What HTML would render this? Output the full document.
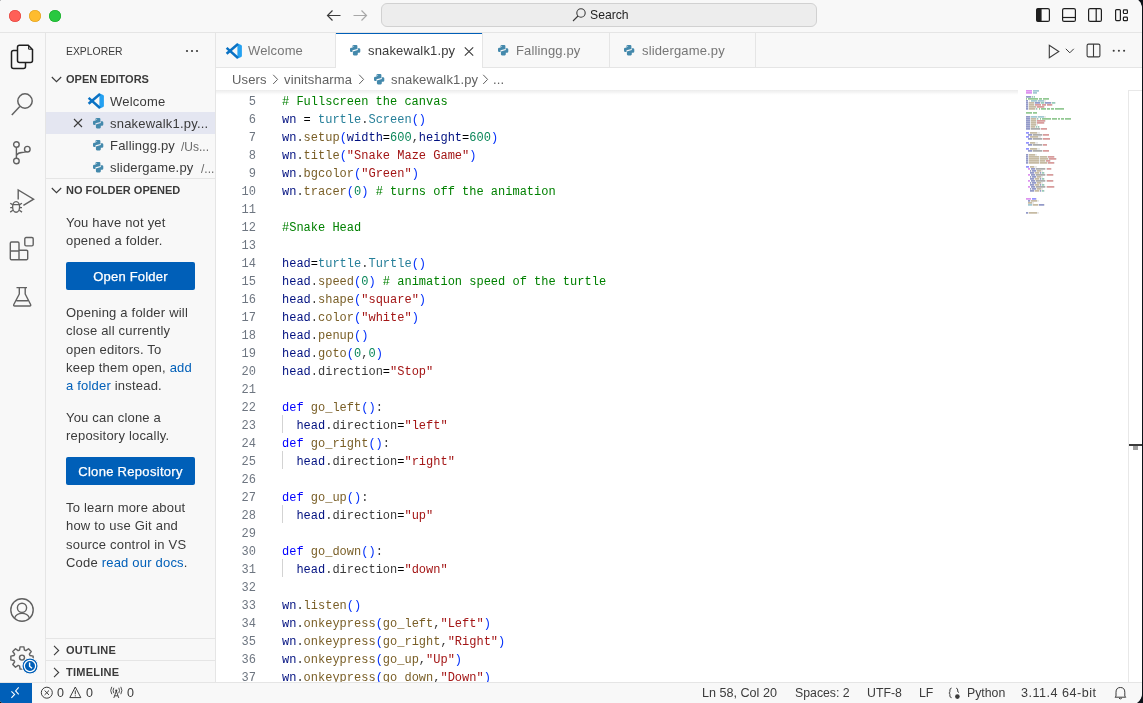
<!DOCTYPE html>
<html><head><meta charset="utf-8">
<style>
*{margin:0;padding:0;box-sizing:border-box}
html,body{width:1143px;height:703px;overflow:hidden;background:#0d1118}
body{position:relative;font-family:"Liberation Sans",sans-serif;color:#3B3B3B}
#win{position:absolute;left:-3px;top:-3px;width:1145px;height:708px;border-radius:12px;overflow:hidden;background:#F8F8F8}
#c{position:absolute;left:3px;top:3px;width:1142px;height:703px;will-change:transform}
.a{position:absolute}
.t{position:absolute;white-space:nowrap}
svg{position:absolute;overflow:visible}
.ln{left:216px;width:40px;text-align:right;font-family:"Liberation Mono",monospace;font-size:12px;line-height:18px;color:#6E7681}
.code{left:282px;font-family:"Liberation Mono",monospace;font-size:12px;line-height:18px;white-space:pre}
</style></head><body>
<div id="win"><div id="c">
<!-- title bar -->
<div class="a" style="left:0;top:0;width:1142px;height:32px;background:#F8F8F8"></div>
<div class="a" style="left:0;top:32px;width:1142px;height:1px;background:#E5E5E5"></div>
<div class="a" style="left:9px;top:10px;width:12px;height:12px;border-radius:50%;background:#FF5F57;box-shadow:inset 0 0 0 0.6px #E0443E"></div>
<div class="a" style="left:29px;top:10px;width:12px;height:12px;border-radius:50%;background:#FEBC2E;box-shadow:inset 0 0 0 0.6px #DEA123"></div>
<div class="a" style="left:49px;top:10px;width:12px;height:12px;border-radius:50%;background:#28C840;box-shadow:inset 0 0 0 0.6px #1AAB29"></div>
<svg style="left:326px;top:9px" width="16" height="13" viewBox="0 0 16 13"><path d="M1.5 6.5H14.5M6.5 1.5L1.5 6.5L6.5 11.5" fill="none" stroke="#3B3B3B" stroke-width="1.2"/></svg>
<svg style="left:352px;top:9px" width="16" height="13" viewBox="0 0 16 13"><path d="M1.5 6.5H14.5M9.5 1.5L14.5 6.5L9.5 11.5" fill="none" stroke="#A8A8A8" stroke-width="1.2"/></svg>
<div class="a" style="left:381px;top:3px;width:436px;height:24px;border-radius:6px;background:#EDEDED;border:1px solid #D1D1D1"></div>
<svg style="left:572px;top:8px" width="14" height="14" viewBox="0 0 14 14"><circle cx="9" cy="5" r="4.2" fill="none" stroke="#3B3B3B" stroke-width="1.1"/><path d="M6 8L1 13" stroke="#3B3B3B" stroke-width="1.1"/></svg>
<div class="t" style="left:590px;top:7px;font-size:12.2px;line-height:16px;color:#1F1F1F">Search</div>
<!-- layout icons -->
<svg style="left:1036px;top:8px" width="14" height="14" viewBox="0 0 14 14"><rect x="0.6" y="0.6" width="12.8" height="12.8" rx="1.5" fill="none" stroke="#1F1F1F" stroke-width="1.2"/><rect x="0.6" y="0.6" width="5" height="12.8" rx="1" fill="#1F1F1F"/></svg>
<svg style="left:1062px;top:8px" width="14" height="14" viewBox="0 0 14 14"><rect x="0.6" y="0.6" width="12.8" height="12.8" rx="1.5" fill="none" stroke="#1F1F1F" stroke-width="1.2"/><path d="M0.6 9.5H13.4" stroke="#1F1F1F" stroke-width="1.2"/></svg>
<svg style="left:1088px;top:8px" width="14" height="14" viewBox="0 0 14 14"><rect x="0.6" y="0.6" width="12.8" height="12.8" rx="1.5" fill="none" stroke="#1F1F1F" stroke-width="1.2"/><path d="M8.2 0.6V13.4" stroke="#1F1F1F" stroke-width="1.2"/></svg>
<svg style="left:1115px;top:9px" width="14" height="13" viewBox="0 0 14 13"><rect x="0.6" y="0.6" width="4.8" height="11" rx="1" fill="none" stroke="#1F1F1F" stroke-width="1.2"/><rect x="8.4" y="0.9" width="4" height="3.6" rx="0.8" fill="none" stroke="#1F1F1F" stroke-width="1.2"/><rect x="8.4" y="8.1" width="4" height="3.6" rx="0.8" fill="none" stroke="#1F1F1F" stroke-width="1.2"/></svg>

<!-- activity bar -->
<div class="a" style="left:45px;top:33px;width:1px;height:649px;background:#E5E5E5"></div>
<!-- files -->
<svg style="left:10px;top:44px" width="24" height="26" viewBox="0 0 24 26"><path d="M7.5 6.5H3.5a2 2 0 0 0-2 2V22.5a2 2 0 0 0 2 2H13.5a2 2 0 0 0 2-2V19" fill="none" stroke="#1F1F1F" stroke-width="1.5"/><path d="M9.5 1.2H18.2L22.5 5.5V16.5a2 2 0 0 1-2 2H9.5a2 2 0 0 1-2-2V3.2a2 2 0 0 1 2-2z" fill="none" stroke="#1F1F1F" stroke-width="1.5"/><path d="M18.6 1.8V5.2H22" fill="none" stroke="#1F1F1F" stroke-width="1"/></svg>
<!-- search -->
<svg style="left:10px;top:91px" width="24" height="26" viewBox="0 0 24 26"><circle cx="15" cy="10" r="7.2" fill="none" stroke="#616161" stroke-width="1.5"/><path d="M9.8 15.5L1.8 24" stroke="#616161" stroke-width="1.5"/></svg>
<!-- scm -->
<svg style="left:10px;top:138px" width="24" height="26" viewBox="0 0 24 26"><circle cx="6.4" cy="6.5" r="2.8" fill="none" stroke="#616161" stroke-width="1.4"/><circle cx="17.3" cy="11.2" r="2.8" fill="none" stroke="#616161" stroke-width="1.4"/><circle cx="6.4" cy="23" r="2.8" fill="none" stroke="#616161" stroke-width="1.4"/><path d="M6.4 9.3V20.2M6.4 17.5C7.5 15.5 9 14.5 12 14.5C14.5 14.5 16 13.8 16.5 13.5" fill="none" stroke="#616161" stroke-width="1.4"/></svg>
<!-- run debug -->
<svg style="left:9px;top:187px" width="26" height="28" viewBox="0 0 26 28"><path d="M9.2 12.4V2.9L24.6 12.2L14.4 18.4" fill="none" stroke="#616161" stroke-width="1.4" stroke-linejoin="miter"/><ellipse cx="7.1" cy="19.9" rx="3.5" ry="5.3" fill="none" stroke="#616161" stroke-width="1.4"/><path d="M3.8 17.6H10.4M3.6 17.6L1.2 16.2M10.6 17.6L13 16.2M3.5 20.6H1.2M10.7 20.6H13M3.9 23.2L1.2 25.1M10.3 23.2L13 25.1" fill="none" stroke="#616161" stroke-width="1.3"/></svg>
<!-- extensions -->
<svg style="left:9px;top:236px" width="26" height="26" viewBox="0 0 26 26"><path d="M2.5 6H8.8a1.2 1.2 0 0 1 1.2 1.2V14.2H17.5a1.2 1.2 0 0 1 1.2 1.2V22.5a1.2 1.2 0 0 1-1.2 1.2H2.5a1.2 1.2 0 0 1-1.2-1.2V7.2A1.2 1.2 0 0 1 2.5 6zM1.3 15H10V23.7" fill="none" stroke="#616161" stroke-width="1.4"/><rect x="15.8" y="1.5" width="8.4" height="8.4" rx="1.3" fill="none" stroke="#616161" stroke-width="1.4"/></svg>
<!-- testing flask -->
<svg style="left:12px;top:285px" width="22" height="24" viewBox="0 0 22 24"><path d="M4.5 2.6H15M7.3 2.6V9L1.8 19.5C1.4 20.4 1.8 21 2.7 21H17.7C18.6 21 19 20.4 18.6 19.5L13.2 9V2.6M4.5 15.7H15.9" fill="none" stroke="#616161" stroke-width="1.4" stroke-linejoin="round"/></svg>
<!-- account -->
<svg style="left:10px;top:598px" width="24" height="24" viewBox="0 0 24 24"><circle cx="12" cy="12" r="11.2" fill="none" stroke="#616161" stroke-width="1.4"/><circle cx="12" cy="9.8" r="4.6" fill="none" stroke="#616161" stroke-width="1.4"/><path d="M4.6 20C5.8 17 8.6 15.4 12 15.4S18.2 17 19.4 20" fill="none" stroke="#616161" stroke-width="1.4"/></svg>
<!-- gear -->
<svg style="left:9px;top:645px" width="26" height="26" viewBox="0 0 26 26"><path d="M9.82 5.33L10.55 5.07L11.09 1.86L14.91 1.86L15.45 5.07L16.18 5.33L16.87 5.66L19.52 3.77L22.23 6.48L20.34 9.13L20.67 9.82L20.93 10.55L24.14 11.09L24.14 14.91L20.93 15.45L20.67 16.18L20.34 16.87L22.23 19.52L19.52 22.23L16.87 20.34L16.18 20.67L15.45 20.93L14.91 24.14L11.09 24.14L10.55 20.93L9.82 20.67L9.13 20.34L6.48 22.23L3.77 19.52L5.66 16.87L5.33 16.18L5.07 15.45L1.86 14.91L1.86 11.09L5.07 10.55L5.33 9.82L5.66 9.13L3.77 6.48L6.48 3.77L9.13 5.66Z" fill="none" stroke="#616161" stroke-width="1.4" stroke-linejoin="round"/><circle cx="13" cy="12.6" r="2.5" fill="none" stroke="#616161" stroke-width="1.4"/></svg>
<svg style="left:21px;top:657px" width="18" height="18" viewBox="0 0 18 18"><circle cx="9" cy="9" r="8" fill="#005FB8" stroke="#F8F8F8" stroke-width="1"/><circle cx="9" cy="9" r="5.6" fill="none" stroke="#fff" stroke-width="1.2"/><path d="M8.6 5.6V9.2L11 11.2" fill="none" stroke="#fff" stroke-width="1.4"/></svg>

<!-- sidebar -->
<div class="a" style="left:215px;top:33px;width:1px;height:649px;background:#E5E5E5"></div>
<div class="t" style="left:66px;top:45px;font-size:10.4px;line-height:14px;letter-spacing:0px;color:#3B3B3B">EXPLORER</div>
<svg style="left:185px;top:49px" width="14" height="4" viewBox="0 0 14 4"><circle cx="2" cy="2" r="1.1" fill="#3B3B3B"/><circle cx="7" cy="2" r="1.1" fill="#3B3B3B"/><circle cx="12" cy="2" r="1.1" fill="#3B3B3B"/></svg>
<svg style="left:51px;top:76px" width="11" height="7" viewBox="0 0 11 7"><path d="M0.8 1L5.5 5.7L10.2 1" fill="none" stroke="#3B3B3B" stroke-width="1.1"/></svg>
<div class="t" style="left:66px;top:72px;font-size:11px;line-height:14px;font-weight:bold;color:#3B3B3B">OPEN EDITORS</div>
<!-- rows -->
<div class="a" style="left:46px;top:112px;width:169px;height:22px;background:#E4E6F1"></div>
<svg style="left:88px;top:93px" width="16" height="16" viewBox="0 0 16 16"><path d="M11.4 0.2L15.2 2Q15.9 2.4 15.9 3.2V12.8Q15.9 13.6 15.2 14L11.4 15.8Z" fill="#24A1F1"/><path d="M12 1L0.6 10.8M0.6 4.9L12 15" stroke="#0A72C4" stroke-width="2.5"/></svg>
<div class="t" style="left:110px;top:91px;font-size:13px;line-height:22px;letter-spacing:0.2px;color:#3B3B3B">Welcome</div>
<svg style="left:73px;top:118px" width="10" height="10" viewBox="0 0 10 10"><path d="M1 1L9 9M9 1L1 9" stroke="#3B3B3B" stroke-width="1.1"/></svg>
<div class="t" style="left:110px;top:113px;font-size:13px;line-height:22px;letter-spacing:0.2px;color:#3B3B3B">snakewalk1.py...</div>
<div class="t" style="left:110px;top:135px;font-size:13px;line-height:22px;letter-spacing:0.2px;color:#3B3B3B">Fallingg.py</div>
<div class="t" style="left:181px;top:136px;font-size:12px;line-height:22px;color:#6A6A6A">/Us...</div>
<div class="t" style="left:110px;top:157px;font-size:13px;line-height:22px;letter-spacing:0.2px;color:#3B3B3B">slidergame.py</div>
<div class="t" style="left:201px;top:158px;font-size:12px;line-height:22px;color:#6A6A6A">/...</div>
<svg style="left:93px;top:118px" width="11" height="11" viewBox="0 0 11 11"><path d="M3.6 0H6.3Q7.4 0 7.4 1.1V3.9L2.5 5.3V7.1H1.3Q0 7.1 0 5.8V4Q0 2.7 1.3 2.7H2.5V1.1Q2.5 0 3.6 0Z" fill="#4489AC"/><path d="M3.6 0H6.3Q7.4 0 7.4 1.1V3.9L2.5 5.3V7.1H1.3Q0 7.1 0 5.8V4Q0 2.7 1.3 2.7H2.5V1.1Q2.5 0 3.6 0Z" transform="rotate(180 5.15 5.2)" fill="#4489AC"/><circle cx="3.6" cy="1.2" r="0.5" fill="#fff" opacity="0.7"/></svg>
<svg style="left:93px;top:140px" width="11" height="11" viewBox="0 0 11 11"><path d="M3.6 0H6.3Q7.4 0 7.4 1.1V3.9L2.5 5.3V7.1H1.3Q0 7.1 0 5.8V4Q0 2.7 1.3 2.7H2.5V1.1Q2.5 0 3.6 0Z" fill="#4489AC"/><path d="M3.6 0H6.3Q7.4 0 7.4 1.1V3.9L2.5 5.3V7.1H1.3Q0 7.1 0 5.8V4Q0 2.7 1.3 2.7H2.5V1.1Q2.5 0 3.6 0Z" transform="rotate(180 5.15 5.2)" fill="#4489AC"/><circle cx="3.6" cy="1.2" r="0.5" fill="#fff" opacity="0.7"/></svg>
<svg style="left:93px;top:162px" width="11" height="11" viewBox="0 0 11 11"><path d="M3.6 0H6.3Q7.4 0 7.4 1.1V3.9L2.5 5.3V7.1H1.3Q0 7.1 0 5.8V4Q0 2.7 1.3 2.7H2.5V1.1Q2.5 0 3.6 0Z" fill="#4489AC"/><path d="M3.6 0H6.3Q7.4 0 7.4 1.1V3.9L2.5 5.3V7.1H1.3Q0 7.1 0 5.8V4Q0 2.7 1.3 2.7H2.5V1.1Q2.5 0 3.6 0Z" transform="rotate(180 5.15 5.2)" fill="#4489AC"/><circle cx="3.6" cy="1.2" r="0.5" fill="#fff" opacity="0.7"/></svg>
<!-- no folder -->
<div class="a" style="left:46px;top:178px;width:169px;height:1px;background:#E5E5E5"></div>
<svg style="left:51px;top:187px" width="11" height="7" viewBox="0 0 11 7"><path d="M0.8 1L5.5 5.7L10.2 1" fill="none" stroke="#3B3B3B" stroke-width="1.1"/></svg>
<div class="t" style="left:66px;top:183px;font-size:11px;line-height:14px;font-weight:bold;color:#3B3B3B">NO FOLDER OPENED</div>
<div class="a" style="left:66px;top:214px;width:150px;font-size:13px;line-height:18.2px;letter-spacing:0.2px;color:#3B3B3B">
<div class="t" style="left:0;top:0">You have not yet</div>
<div class="t" style="left:0;top:18.3px">opened a folder.</div>
</div>
<div class="a" style="left:66px;top:262px;width:129px;height:28px;background:#005FB8;border-radius:2px"></div>
<div class="t" style="left:66px;top:263px;width:129px;text-align:center;font-size:13px;line-height:28px;letter-spacing:0.2px;color:#fff;-webkit-text-stroke:0.25px #fff">Open Folder</div>
<div class="a" style="left:66px;top:304px;width:150px;font-size:13px;line-height:18.2px;letter-spacing:0.2px;color:#3B3B3B">
<div class="t" style="left:0;top:0">Opening a folder will</div>
<div class="t" style="left:0;top:18.3px">close all currently</div>
<div class="t" style="left:0;top:36.6px">open editors. To</div>
<div class="t" style="left:0;top:54.9px">keep them open, <span style="color:#005FB8">add</span></div>
<div class="t" style="left:0;top:73.2px"><span style="color:#005FB8">a folder</span> instead.</div>
</div>
<div class="a" style="left:66px;top:409px;width:150px;font-size:13px;line-height:18.2px;letter-spacing:0.2px;color:#3B3B3B">
<div class="t" style="left:0;top:0">You can clone a</div>
<div class="t" style="left:0;top:18.3px">repository locally.</div>
</div>
<div class="a" style="left:66px;top:457px;width:129px;height:28px;background:#005FB8;border-radius:2px"></div>
<div class="t" style="left:66px;top:458px;width:129px;text-align:center;font-size:13px;line-height:28px;letter-spacing:0.3px;color:#fff;-webkit-text-stroke:0.25px #fff">Clone Repository</div>
<div class="a" style="left:66px;top:499px;width:150px;font-size:13px;line-height:18.2px;letter-spacing:0.2px;color:#3B3B3B">
<div class="t" style="left:0;top:0">To learn more about</div>
<div class="t" style="left:0;top:18.3px">how to use Git and</div>
<div class="t" style="left:0;top:36.6px">source control in VS</div>
<div class="t" style="left:0;top:54.9px">Code <span style="color:#005FB8">read our docs</span>.</div>
</div>
<!-- outline / timeline -->
<div class="a" style="left:46px;top:638px;width:169px;height:1px;background:#E5E5E5"></div>
<svg style="left:53px;top:645px" width="7" height="11" viewBox="0 0 7 11"><path d="M1 0.8L5.7 5.5L1 10.2" fill="none" stroke="#3B3B3B" stroke-width="1.1"/></svg>
<div class="t" style="left:66px;top:643px;font-size:11px;line-height:14px;font-weight:bold;letter-spacing:0.25px;color:#3B3B3B">OUTLINE</div>
<div class="a" style="left:46px;top:660px;width:169px;height:1px;background:#E5E5E5"></div>
<svg style="left:53px;top:667px" width="7" height="11" viewBox="0 0 7 11"><path d="M1 0.8L5.7 5.5L1 10.2" fill="none" stroke="#3B3B3B" stroke-width="1.1"/></svg>
<div class="t" style="left:66px;top:665px;font-size:11px;line-height:14px;font-weight:bold;letter-spacing:0.25px;color:#3B3B3B">TIMELINE</div>

<!-- tabs -->
<div class="a" style="left:216px;top:33px;width:926px;height:35px;background:#F8F8F8"></div>
<div class="a" style="left:216px;top:67px;width:926px;height:1px;background:#E5E5E5"></div>
<div class="a" style="left:335px;top:33px;width:1px;height:34px;background:#E5E5E5"></div>
<div class="a" style="left:336px;top:33px;width:146px;height:35px;background:#FFFFFF"></div>
<div class="a" style="left:336px;top:33px;width:146px;height:1px;background:#005FB8"></div>
<div class="a" style="left:482px;top:33px;width:1px;height:34px;background:#E5E5E5"></div>
<div class="a" style="left:609px;top:33px;width:1px;height:34px;background:#E5E5E5"></div>
<div class="a" style="left:755px;top:33px;width:1px;height:34px;background:#E5E5E5"></div>
<svg style="left:226px;top:43px" width="16" height="16" viewBox="0 0 16 16"><path d="M11.4 0.2L15.2 2Q15.9 2.4 15.9 3.2V12.8Q15.9 13.6 15.2 14L11.4 15.8Z" fill="#24A1F1"/><path d="M12 1L0.6 10.8M0.6 4.9L12 15" stroke="#0A72C4" stroke-width="2.5"/></svg>
<div class="t" style="left:248px;top:40px;font-size:13px;line-height:22px;letter-spacing:0.15px;color:#767676">Welcome</div>
<div class="t" style="left:368px;top:40px;font-size:13px;line-height:22px;letter-spacing:0.15px;color:#3B3B3B">snakewalk1.py</div>
<svg style="left:464px;top:47px" width="10" height="9" viewBox="0 0 10 9"><path d="M0.8 0.4L9.2 8.6M9.2 0.4L0.8 8.6" stroke="#3B3B3B" stroke-width="1.1"/></svg>
<div class="t" style="left:516px;top:40px;font-size:13px;line-height:22px;letter-spacing:0.15px;color:#767676">Fallingg.py</div>
<div class="t" style="left:642px;top:40px;font-size:13px;line-height:22px;letter-spacing:0.15px;color:#767676">slidergame.py</div>
<!-- editor actions -->
<svg style="left:1048px;top:44px" width="12" height="15" viewBox="0 0 12 15"><path d="M1.3 1.2V13.8L10.8 7.5Z" fill="none" stroke="#3B3B3B" stroke-width="1.1" stroke-linejoin="miter"/></svg>
<svg style="left:1065px;top:48px" width="10" height="6" viewBox="0 0 10 6"><path d="M0.8 0.8L4.8 4.8L8.8 0.8" fill="none" stroke="#3B3B3B" stroke-width="1"/></svg>
<svg style="left:1086px;top:43px" width="15" height="15" viewBox="0 0 15 15"><rect x="1.1" y="1.1" width="12.8" height="12.8" rx="1.4" fill="none" stroke="#3B3B3B" stroke-width="1.1"/><path d="M7.5 1.1V13.9" stroke="#3B3B3B" stroke-width="1.1"/></svg>
<svg style="left:1112px;top:49px" width="14" height="4" viewBox="0 0 14 4"><circle cx="1.7" cy="1.8" r="1.05" fill="#3B3B3B"/><circle cx="6.9" cy="1.8" r="1.05" fill="#3B3B3B"/><circle cx="12.1" cy="1.8" r="1.05" fill="#3B3B3B"/></svg>
<!-- breadcrumbs -->
<div class="a" style="left:216px;top:68px;width:926px;height:23px;background:#FFFFFF"></div>
<div class="t" style="left:232px;top:69px;font-size:13px;line-height:22px;letter-spacing:0.15px;color:#616161">Users</div>
<svg style="left:272px;top:74px" width="7" height="11" viewBox="0 0 7 11"><path d="M1.2 0.8L5.6 5.4L1.2 10" fill="none" stroke="#616161" stroke-width="1"/></svg>
<div class="t" style="left:284px;top:69px;font-size:13px;line-height:22px;letter-spacing:0.15px;color:#616161">vinitsharma</div>
<svg style="left:358px;top:74px" width="7" height="11" viewBox="0 0 7 11"><path d="M1.2 0.8L5.6 5.4L1.2 10" fill="none" stroke="#616161" stroke-width="1"/></svg>
<div class="t" style="left:391px;top:69px;font-size:13px;line-height:22px;letter-spacing:0.15px;color:#616161">snakewalk1.py</div>
<svg style="left:482px;top:74px" width="7" height="11" viewBox="0 0 7 11"><path d="M1.2 0.8L5.6 5.4L1.2 10" fill="none" stroke="#616161" stroke-width="1"/></svg>
<div class="t" style="left:493px;top:69px;font-size:13px;line-height:22px;letter-spacing:0.15px;color:#616161">...</div>

<svg style="left:350px;top:45px" width="11" height="11" viewBox="0 0 11 11"><path d="M3.6 0H6.3Q7.4 0 7.4 1.1V3.9L2.5 5.3V7.1H1.3Q0 7.1 0 5.8V4Q0 2.7 1.3 2.7H2.5V1.1Q2.5 0 3.6 0Z" fill="#4489AC"/><path d="M3.6 0H6.3Q7.4 0 7.4 1.1V3.9L2.5 5.3V7.1H1.3Q0 7.1 0 5.8V4Q0 2.7 1.3 2.7H2.5V1.1Q2.5 0 3.6 0Z" transform="rotate(180 5.15 5.2)" fill="#4489AC"/><circle cx="3.6" cy="1.2" r="0.5" fill="#fff" opacity="0.7"/></svg>
<svg style="left:498px;top:45px" width="11" height="11" viewBox="0 0 11 11"><path d="M3.6 0H6.3Q7.4 0 7.4 1.1V3.9L2.5 5.3V7.1H1.3Q0 7.1 0 5.8V4Q0 2.7 1.3 2.7H2.5V1.1Q2.5 0 3.6 0Z" fill="#4489AC"/><path d="M3.6 0H6.3Q7.4 0 7.4 1.1V3.9L2.5 5.3V7.1H1.3Q0 7.1 0 5.8V4Q0 2.7 1.3 2.7H2.5V1.1Q2.5 0 3.6 0Z" transform="rotate(180 5.15 5.2)" fill="#4489AC"/><circle cx="3.6" cy="1.2" r="0.5" fill="#fff" opacity="0.7"/></svg>
<svg style="left:624px;top:45px" width="11" height="11" viewBox="0 0 11 11"><path d="M3.6 0H6.3Q7.4 0 7.4 1.1V3.9L2.5 5.3V7.1H1.3Q0 7.1 0 5.8V4Q0 2.7 1.3 2.7H2.5V1.1Q2.5 0 3.6 0Z" fill="#4489AC"/><path d="M3.6 0H6.3Q7.4 0 7.4 1.1V3.9L2.5 5.3V7.1H1.3Q0 7.1 0 5.8V4Q0 2.7 1.3 2.7H2.5V1.1Q2.5 0 3.6 0Z" transform="rotate(180 5.15 5.2)" fill="#4489AC"/><circle cx="3.6" cy="1.2" r="0.5" fill="#fff" opacity="0.7"/></svg>
<svg style="left:374px;top:74px" width="11" height="11" viewBox="0 0 11 11"><path d="M3.6 0H6.3Q7.4 0 7.4 1.1V3.9L2.5 5.3V7.1H1.3Q0 7.1 0 5.8V4Q0 2.7 1.3 2.7H2.5V1.1Q2.5 0 3.6 0Z" fill="#4489AC"/><path d="M3.6 0H6.3Q7.4 0 7.4 1.1V3.9L2.5 5.3V7.1H1.3Q0 7.1 0 5.8V4Q0 2.7 1.3 2.7H2.5V1.1Q2.5 0 3.6 0Z" transform="rotate(180 5.15 5.2)" fill="#4489AC"/><circle cx="3.6" cy="1.2" r="0.5" fill="#fff" opacity="0.7"/></svg>
<!-- editor -->
<div class="a" style="left:216px;top:91px;width:926px;height:591px;background:#FFFFFF"></div>
<div class="t ln" style="top:93px">5</div>
<div class="t code" style="top:93px"><span style="color:#008000"># Fullscreen the canvas</span></div>
<div class="t ln" style="top:111px">6</div>
<div class="t code" style="top:111px"><span style="color:#001080">wn</span><span style="color:#3B3B3B"> </span><span style="color:#000000">=</span><span style="color:#3B3B3B"> </span><span style="color:#267F99">turtle</span><span style="color:#3B3B3B">.</span><span style="color:#267F99">Screen</span><span style="color:#0431FA">()</span></div>
<div class="t ln" style="top:129px">7</div>
<div class="t code" style="top:129px"><span style="color:#001080">wn</span><span style="color:#3B3B3B">.</span><span style="color:#795E26">setup</span><span style="color:#0431FA">(</span><span style="color:#001080">width</span><span style="color:#000000">=</span><span style="color:#098658">600</span><span style="color:#3B3B3B">,</span><span style="color:#001080">height</span><span style="color:#000000">=</span><span style="color:#098658">600</span><span style="color:#0431FA">)</span></div>
<div class="t ln" style="top:147px">8</div>
<div class="t code" style="top:147px"><span style="color:#001080">wn</span><span style="color:#3B3B3B">.</span><span style="color:#795E26">title</span><span style="color:#0431FA">(</span><span style="color:#A31515">&quot;Snake Maze Game&quot;</span><span style="color:#0431FA">)</span></div>
<div class="t ln" style="top:165px">9</div>
<div class="t code" style="top:165px"><span style="color:#001080">wn</span><span style="color:#3B3B3B">.</span><span style="color:#795E26">bgcolor</span><span style="color:#0431FA">(</span><span style="color:#A31515">&quot;Green&quot;</span><span style="color:#0431FA">)</span></div>
<div class="t ln" style="top:183px">10</div>
<div class="t code" style="top:183px"><span style="color:#001080">wn</span><span style="color:#3B3B3B">.</span><span style="color:#795E26">tracer</span><span style="color:#0431FA">(</span><span style="color:#098658">0</span><span style="color:#0431FA">)</span><span style="color:#3B3B3B"> </span><span style="color:#008000"># turns off the animation</span></div>
<div class="t ln" style="top:201px">11</div>
<div class="t ln" style="top:219px">12</div>
<div class="t code" style="top:219px"><span style="color:#008000">#Snake Head</span></div>
<div class="t ln" style="top:237px">13</div>
<div class="t ln" style="top:255px">14</div>
<div class="t code" style="top:255px"><span style="color:#001080">head</span><span style="color:#000000">=</span><span style="color:#267F99">turtle</span><span style="color:#3B3B3B">.</span><span style="color:#267F99">Turtle</span><span style="color:#0431FA">()</span></div>
<div class="t ln" style="top:273px">15</div>
<div class="t code" style="top:273px"><span style="color:#001080">head</span><span style="color:#3B3B3B">.</span><span style="color:#795E26">speed</span><span style="color:#0431FA">(</span><span style="color:#098658">0</span><span style="color:#0431FA">)</span><span style="color:#3B3B3B"> </span><span style="color:#008000"># animation speed of the turtle</span></div>
<div class="t ln" style="top:291px">16</div>
<div class="t code" style="top:291px"><span style="color:#001080">head</span><span style="color:#3B3B3B">.</span><span style="color:#795E26">shape</span><span style="color:#0431FA">(</span><span style="color:#A31515">&quot;square&quot;</span><span style="color:#0431FA">)</span></div>
<div class="t ln" style="top:309px">17</div>
<div class="t code" style="top:309px"><span style="color:#001080">head</span><span style="color:#3B3B3B">.</span><span style="color:#795E26">color</span><span style="color:#0431FA">(</span><span style="color:#A31515">&quot;white&quot;</span><span style="color:#0431FA">)</span></div>
<div class="t ln" style="top:327px">18</div>
<div class="t code" style="top:327px"><span style="color:#001080">head</span><span style="color:#3B3B3B">.</span><span style="color:#795E26">penup</span><span style="color:#0431FA">()</span></div>
<div class="t ln" style="top:345px">19</div>
<div class="t code" style="top:345px"><span style="color:#001080">head</span><span style="color:#3B3B3B">.</span><span style="color:#795E26">goto</span><span style="color:#0431FA">(</span><span style="color:#098658">0</span><span style="color:#3B3B3B">,</span><span style="color:#098658">0</span><span style="color:#0431FA">)</span></div>
<div class="t ln" style="top:363px">20</div>
<div class="t code" style="top:363px"><span style="color:#001080">head</span><span style="color:#3B3B3B">.</span><span style="color:#3B3B3B">direction</span><span style="color:#000000">=</span><span style="color:#A31515">&quot;Stop&quot;</span></div>
<div class="t ln" style="top:381px">21</div>
<div class="t ln" style="top:399px">22</div>
<div class="t code" style="top:399px"><span style="color:#0000FF">def</span><span style="color:#3B3B3B"> </span><span style="color:#795E26">go_left</span><span style="color:#0431FA">()</span><span style="color:#3B3B3B">:</span></div>
<div class="t ln" style="top:417px">23</div>
<div class="t code" style="top:417px"><span style="color:#3B3B3B">  </span><span style="color:#001080">head</span><span style="color:#3B3B3B">.direction</span><span style="color:#000000">=</span><span style="color:#A31515">&quot;left&quot;</span></div>
<div class="t ln" style="top:435px">24</div>
<div class="t code" style="top:435px"><span style="color:#0000FF">def</span><span style="color:#3B3B3B"> </span><span style="color:#795E26">go_right</span><span style="color:#0431FA">()</span><span style="color:#3B3B3B">:</span></div>
<div class="t ln" style="top:453px">25</div>
<div class="t code" style="top:453px"><span style="color:#3B3B3B">  </span><span style="color:#001080">head</span><span style="color:#3B3B3B">.direction</span><span style="color:#000000">=</span><span style="color:#A31515">&quot;right&quot;</span></div>
<div class="t ln" style="top:471px">26</div>
<div class="t ln" style="top:489px">27</div>
<div class="t code" style="top:489px"><span style="color:#0000FF">def</span><span style="color:#3B3B3B"> </span><span style="color:#795E26">go_up</span><span style="color:#0431FA">()</span><span style="color:#3B3B3B">:</span></div>
<div class="t ln" style="top:507px">28</div>
<div class="t code" style="top:507px"><span style="color:#3B3B3B">  </span><span style="color:#001080">head</span><span style="color:#3B3B3B">.direction</span><span style="color:#000000">=</span><span style="color:#A31515">&quot;up&quot;</span></div>
<div class="t ln" style="top:525px">29</div>
<div class="t ln" style="top:543px">30</div>
<div class="t code" style="top:543px"><span style="color:#0000FF">def</span><span style="color:#3B3B3B"> </span><span style="color:#795E26">go_down</span><span style="color:#0431FA">()</span><span style="color:#3B3B3B">:</span></div>
<div class="t ln" style="top:561px">31</div>
<div class="t code" style="top:561px"><span style="color:#3B3B3B">  </span><span style="color:#001080">head</span><span style="color:#3B3B3B">.direction</span><span style="color:#000000">=</span><span style="color:#A31515">&quot;down&quot;</span></div>
<div class="t ln" style="top:579px">32</div>
<div class="t ln" style="top:597px">33</div>
<div class="t code" style="top:597px"><span style="color:#001080">wn</span><span style="color:#3B3B3B">.</span><span style="color:#795E26">listen</span><span style="color:#0431FA">()</span></div>
<div class="t ln" style="top:615px">34</div>
<div class="t code" style="top:615px"><span style="color:#001080">wn</span><span style="color:#3B3B3B">.</span><span style="color:#795E26">onkeypress</span><span style="color:#0431FA">(</span><span style="color:#795E26">go_left</span><span style="color:#3B3B3B">,</span><span style="color:#A31515">&quot;Left&quot;</span><span style="color:#0431FA">)</span></div>
<div class="t ln" style="top:633px">35</div>
<div class="t code" style="top:633px"><span style="color:#001080">wn</span><span style="color:#3B3B3B">.</span><span style="color:#795E26">onkeypress</span><span style="color:#0431FA">(</span><span style="color:#795E26">go_right</span><span style="color:#3B3B3B">,</span><span style="color:#A31515">&quot;Right&quot;</span><span style="color:#0431FA">)</span></div>
<div class="t ln" style="top:651px">36</div>
<div class="t code" style="top:651px"><span style="color:#001080">wn</span><span style="color:#3B3B3B">.</span><span style="color:#795E26">onkeypress</span><span style="color:#0431FA">(</span><span style="color:#795E26">go_up</span><span style="color:#3B3B3B">,</span><span style="color:#A31515">&quot;Up&quot;</span><span style="color:#0431FA">)</span></div>
<div class="t ln" style="top:669px">37</div>
<div class="t code" style="top:669px"><span style="color:#001080">wn</span><span style="color:#3B3B3B">.</span><span style="color:#795E26">onkeypress</span><span style="color:#0431FA">(</span><span style="color:#795E26">go_down</span><span style="color:#3B3B3B">,</span><span style="color:#A31515">&quot;Down&quot;</span><span style="color:#0431FA">)</span></div>
<div class="a" style="left:282px;top:415px;width:1px;height:18px;background:#D3D3D3"></div>
<div class="a" style="left:282px;top:451px;width:1px;height:18px;background:#D3D3D3"></div>
<div class="a" style="left:282px;top:505px;width:1px;height:18px;background:#D3D3D3"></div>
<div class="a" style="left:282px;top:559px;width:1px;height:18px;background:#D3D3D3"></div>
<div class="a" style="left:216px;top:90px;width:802px;height:5px;background:linear-gradient(#ECECEC,rgba(236,236,236,0))"></div>
<svg style="left:1026px;top:90px" width="100" height="130" viewBox="0 0 100 130"><g opacity="0.42"><rect x="0" y="0" width="6" height="1.75" fill="#AF00DB"/><rect x="7" y="0" width="6" height="1.75" fill="#267F99"/><rect x="0" y="2" width="6" height="1.75" fill="#AF00DB"/><rect x="7" y="2" width="4" height="1.75" fill="#267F99"/><rect x="0" y="6" width="5" height="1.75" fill="#001080"/><rect x="5" y="6" width="1" height="1.75" fill="#C8C8C8"/><rect x="6" y="6" width="1" height="1.75" fill="#098658"/><rect x="7" y="6" width="1" height="1.75" fill="#C8C8C8"/><rect x="8" y="6" width="1" height="1.75" fill="#098658"/><rect x="0" y="8" width="1" height="1.75" fill="#008000"/><rect x="2" y="8" width="10" height="1.75" fill="#008000"/><rect x="13" y="8" width="3" height="1.75" fill="#008000"/><rect x="17" y="8" width="6" height="1.75" fill="#008000"/><rect x="0" y="10" width="2" height="1.75" fill="#001080"/><rect x="3" y="10" width="1" height="1.75" fill="#C8C8C8"/><rect x="5" y="10" width="6" height="1.75" fill="#267F99"/><rect x="11" y="10" width="1" height="1.75" fill="#C8C8C8"/><rect x="12" y="10" width="6" height="1.75" fill="#267F99"/><rect x="18" y="10" width="2" height="1.75" fill="#C8C8C8"/><rect x="0" y="12" width="2" height="1.75" fill="#001080"/><rect x="2" y="12" width="1" height="1.75" fill="#C8C8C8"/><rect x="3" y="12" width="5" height="1.75" fill="#795E26"/><rect x="8" y="12" width="1" height="1.75" fill="#C8C8C8"/><rect x="9" y="12" width="5" height="1.75" fill="#001080"/><rect x="14" y="12" width="1" height="1.75" fill="#C8C8C8"/><rect x="15" y="12" width="3" height="1.75" fill="#098658"/><rect x="18" y="12" width="1" height="1.75" fill="#C8C8C8"/><rect x="19" y="12" width="6" height="1.75" fill="#001080"/><rect x="25" y="12" width="1" height="1.75" fill="#C8C8C8"/><rect x="26" y="12" width="3" height="1.75" fill="#098658"/><rect x="29" y="12" width="1" height="1.75" fill="#C8C8C8"/><rect x="0" y="14" width="2" height="1.75" fill="#001080"/><rect x="2" y="14" width="1" height="1.75" fill="#C8C8C8"/><rect x="3" y="14" width="5" height="1.75" fill="#795E26"/><rect x="8" y="14" width="1" height="1.75" fill="#C8C8C8"/><rect x="9" y="14" width="6" height="1.75" fill="#A31515"/><rect x="16" y="14" width="4" height="1.75" fill="#A31515"/><rect x="21" y="14" width="5" height="1.75" fill="#A31515"/><rect x="26" y="14" width="1" height="1.75" fill="#C8C8C8"/><rect x="0" y="16" width="2" height="1.75" fill="#001080"/><rect x="2" y="16" width="1" height="1.75" fill="#C8C8C8"/><rect x="3" y="16" width="7" height="1.75" fill="#795E26"/><rect x="10" y="16" width="1" height="1.75" fill="#C8C8C8"/><rect x="11" y="16" width="7" height="1.75" fill="#A31515"/><rect x="18" y="16" width="1" height="1.75" fill="#C8C8C8"/><rect x="0" y="18" width="2" height="1.75" fill="#001080"/><rect x="2" y="18" width="1" height="1.75" fill="#C8C8C8"/><rect x="3" y="18" width="6" height="1.75" fill="#795E26"/><rect x="9" y="18" width="1" height="1.75" fill="#C8C8C8"/><rect x="10" y="18" width="1" height="1.75" fill="#098658"/><rect x="11" y="18" width="1" height="1.75" fill="#C8C8C8"/><rect x="13" y="18" width="1" height="1.75" fill="#008000"/><rect x="15" y="18" width="5" height="1.75" fill="#008000"/><rect x="21" y="18" width="3" height="1.75" fill="#008000"/><rect x="25" y="18" width="3" height="1.75" fill="#008000"/><rect x="29" y="18" width="9" height="1.75" fill="#008000"/><rect x="0" y="22" width="6" height="1.75" fill="#008000"/><rect x="7" y="22" width="4" height="1.75" fill="#008000"/><rect x="0" y="26" width="4" height="1.75" fill="#001080"/><rect x="4" y="26" width="1" height="1.75" fill="#C8C8C8"/><rect x="5" y="26" width="6" height="1.75" fill="#267F99"/><rect x="11" y="26" width="1" height="1.75" fill="#C8C8C8"/><rect x="12" y="26" width="6" height="1.75" fill="#267F99"/><rect x="18" y="26" width="2" height="1.75" fill="#C8C8C8"/><rect x="0" y="28" width="4" height="1.75" fill="#001080"/><rect x="4" y="28" width="1" height="1.75" fill="#C8C8C8"/><rect x="5" y="28" width="5" height="1.75" fill="#795E26"/><rect x="10" y="28" width="1" height="1.75" fill="#C8C8C8"/><rect x="11" y="28" width="1" height="1.75" fill="#098658"/><rect x="12" y="28" width="1" height="1.75" fill="#C8C8C8"/><rect x="14" y="28" width="1" height="1.75" fill="#008000"/><rect x="16" y="28" width="9" height="1.75" fill="#008000"/><rect x="26" y="28" width="5" height="1.75" fill="#008000"/><rect x="32" y="28" width="2" height="1.75" fill="#008000"/><rect x="35" y="28" width="3" height="1.75" fill="#008000"/><rect x="39" y="28" width="6" height="1.75" fill="#008000"/><rect x="0" y="30" width="4" height="1.75" fill="#001080"/><rect x="4" y="30" width="1" height="1.75" fill="#C8C8C8"/><rect x="5" y="30" width="5" height="1.75" fill="#795E26"/><rect x="10" y="30" width="1" height="1.75" fill="#C8C8C8"/><rect x="11" y="30" width="8" height="1.75" fill="#A31515"/><rect x="19" y="30" width="1" height="1.75" fill="#C8C8C8"/><rect x="0" y="32" width="4" height="1.75" fill="#001080"/><rect x="4" y="32" width="1" height="1.75" fill="#C8C8C8"/><rect x="5" y="32" width="5" height="1.75" fill="#795E26"/><rect x="10" y="32" width="1" height="1.75" fill="#C8C8C8"/><rect x="11" y="32" width="7" height="1.75" fill="#A31515"/><rect x="18" y="32" width="1" height="1.75" fill="#C8C8C8"/><rect x="0" y="34" width="4" height="1.75" fill="#001080"/><rect x="4" y="34" width="1" height="1.75" fill="#C8C8C8"/><rect x="5" y="34" width="5" height="1.75" fill="#795E26"/><rect x="10" y="34" width="2" height="1.75" fill="#C8C8C8"/><rect x="0" y="36" width="4" height="1.75" fill="#001080"/><rect x="4" y="36" width="1" height="1.75" fill="#C8C8C8"/><rect x="5" y="36" width="4" height="1.75" fill="#795E26"/><rect x="9" y="36" width="1" height="1.75" fill="#C8C8C8"/><rect x="10" y="36" width="1" height="1.75" fill="#098658"/><rect x="11" y="36" width="1" height="1.75" fill="#C8C8C8"/><rect x="12" y="36" width="1" height="1.75" fill="#098658"/><rect x="13" y="36" width="1" height="1.75" fill="#C8C8C8"/><rect x="0" y="38" width="4" height="1.75" fill="#001080"/><rect x="4" y="38" width="1" height="1.75" fill="#C8C8C8"/><rect x="5" y="38" width="9" height="1.75" fill="#3B3B3B"/><rect x="14" y="38" width="1" height="1.75" fill="#C8C8C8"/><rect x="15" y="38" width="6" height="1.75" fill="#A31515"/><rect x="0" y="42" width="3" height="1.75" fill="#0000FF"/><rect x="4" y="42" width="7" height="1.75" fill="#795E26"/><rect x="11" y="42" width="3" height="1.75" fill="#C8C8C8"/><rect x="2" y="44" width="4" height="1.75" fill="#001080"/><rect x="6" y="44" width="1" height="1.75" fill="#C8C8C8"/><rect x="7" y="44" width="9" height="1.75" fill="#3B3B3B"/><rect x="16" y="44" width="1" height="1.75" fill="#C8C8C8"/><rect x="17" y="44" width="6" height="1.75" fill="#A31515"/><rect x="0" y="46" width="3" height="1.75" fill="#0000FF"/><rect x="4" y="46" width="8" height="1.75" fill="#795E26"/><rect x="12" y="46" width="3" height="1.75" fill="#C8C8C8"/><rect x="2" y="48" width="4" height="1.75" fill="#001080"/><rect x="6" y="48" width="1" height="1.75" fill="#C8C8C8"/><rect x="7" y="48" width="9" height="1.75" fill="#3B3B3B"/><rect x="16" y="48" width="1" height="1.75" fill="#C8C8C8"/><rect x="17" y="48" width="7" height="1.75" fill="#A31515"/><rect x="0" y="52" width="3" height="1.75" fill="#0000FF"/><rect x="4" y="52" width="5" height="1.75" fill="#795E26"/><rect x="9" y="52" width="3" height="1.75" fill="#C8C8C8"/><rect x="2" y="54" width="4" height="1.75" fill="#001080"/><rect x="6" y="54" width="1" height="1.75" fill="#C8C8C8"/><rect x="7" y="54" width="9" height="1.75" fill="#3B3B3B"/><rect x="16" y="54" width="1" height="1.75" fill="#C8C8C8"/><rect x="17" y="54" width="4" height="1.75" fill="#A31515"/><rect x="0" y="58" width="3" height="1.75" fill="#0000FF"/><rect x="4" y="58" width="7" height="1.75" fill="#795E26"/><rect x="11" y="58" width="3" height="1.75" fill="#C8C8C8"/><rect x="2" y="60" width="4" height="1.75" fill="#001080"/><rect x="6" y="60" width="1" height="1.75" fill="#C8C8C8"/><rect x="7" y="60" width="9" height="1.75" fill="#3B3B3B"/><rect x="16" y="60" width="1" height="1.75" fill="#C8C8C8"/><rect x="17" y="60" width="6" height="1.75" fill="#A31515"/><rect x="0" y="64" width="2" height="1.75" fill="#001080"/><rect x="2" y="64" width="1" height="1.75" fill="#C8C8C8"/><rect x="3" y="64" width="6" height="1.75" fill="#795E26"/><rect x="9" y="64" width="2" height="1.75" fill="#C8C8C8"/><rect x="0" y="66" width="2" height="1.75" fill="#001080"/><rect x="2" y="66" width="1" height="1.75" fill="#C8C8C8"/><rect x="3" y="66" width="10" height="1.75" fill="#795E26"/><rect x="13" y="66" width="1" height="1.75" fill="#C8C8C8"/><rect x="14" y="66" width="7" height="1.75" fill="#795E26"/><rect x="21" y="66" width="1" height="1.75" fill="#C8C8C8"/><rect x="22" y="66" width="6" height="1.75" fill="#A31515"/><rect x="28" y="66" width="1" height="1.75" fill="#C8C8C8"/><rect x="0" y="68" width="2" height="1.75" fill="#001080"/><rect x="2" y="68" width="1" height="1.75" fill="#C8C8C8"/><rect x="3" y="68" width="10" height="1.75" fill="#795E26"/><rect x="13" y="68" width="1" height="1.75" fill="#C8C8C8"/><rect x="14" y="68" width="8" height="1.75" fill="#795E26"/><rect x="22" y="68" width="1" height="1.75" fill="#C8C8C8"/><rect x="23" y="68" width="7" height="1.75" fill="#A31515"/><rect x="30" y="68" width="1" height="1.75" fill="#C8C8C8"/><rect x="0" y="70" width="2" height="1.75" fill="#001080"/><rect x="2" y="70" width="1" height="1.75" fill="#C8C8C8"/><rect x="3" y="70" width="10" height="1.75" fill="#795E26"/><rect x="13" y="70" width="1" height="1.75" fill="#C8C8C8"/><rect x="14" y="70" width="5" height="1.75" fill="#795E26"/><rect x="19" y="70" width="1" height="1.75" fill="#C8C8C8"/><rect x="20" y="70" width="4" height="1.75" fill="#A31515"/><rect x="24" y="70" width="1" height="1.75" fill="#C8C8C8"/><rect x="0" y="72" width="2" height="1.75" fill="#001080"/><rect x="2" y="72" width="1" height="1.75" fill="#C8C8C8"/><rect x="3" y="72" width="10" height="1.75" fill="#795E26"/><rect x="13" y="72" width="1" height="1.75" fill="#C8C8C8"/><rect x="14" y="72" width="7" height="1.75" fill="#795E26"/><rect x="21" y="72" width="1" height="1.75" fill="#C8C8C8"/><rect x="22" y="72" width="6" height="1.75" fill="#A31515"/><rect x="28" y="72" width="1" height="1.75" fill="#C8C8C8"/><rect x="0" y="76" width="3" height="1.75" fill="#0000FF"/><rect x="4" y="76" width="4" height="1.75" fill="#795E26"/><rect x="8" y="76" width="3" height="1.75" fill="#C8C8C8"/><rect x="2" y="78" width="2" height="1.75" fill="#AF00DB"/><rect x="5" y="78" width="4" height="1.75" fill="#001080"/><rect x="9" y="78" width="1" height="1.75" fill="#C8C8C8"/><rect x="10" y="78" width="9" height="1.75" fill="#3B3B3B"/><rect x="19" y="78" width="2" height="1.75" fill="#C8C8C8"/><rect x="21" y="78" width="4" height="1.75" fill="#A31515"/><rect x="25" y="78" width="1" height="1.75" fill="#C8C8C8"/><rect x="4" y="80" width="1" height="1.75" fill="#001080"/><rect x="5" y="80" width="1" height="1.75" fill="#C8C8C8"/><rect x="6" y="80" width="4" height="1.75" fill="#001080"/><rect x="10" y="80" width="1" height="1.75" fill="#C8C8C8"/><rect x="11" y="80" width="4" height="1.75" fill="#795E26"/><rect x="15" y="80" width="2" height="1.75" fill="#C8C8C8"/><rect x="4" y="82" width="4" height="1.75" fill="#001080"/><rect x="8" y="82" width="1" height="1.75" fill="#C8C8C8"/><rect x="9" y="82" width="4" height="1.75" fill="#795E26"/><rect x="13" y="82" width="1" height="1.75" fill="#C8C8C8"/><rect x="14" y="82" width="1" height="1.75" fill="#001080"/><rect x="15" y="82" width="1" height="1.75" fill="#C8C8C8"/><rect x="16" y="82" width="2" height="1.75" fill="#098658"/><rect x="18" y="82" width="1" height="1.75" fill="#C8C8C8"/><rect x="2" y="84" width="2" height="1.75" fill="#AF00DB"/><rect x="5" y="84" width="4" height="1.75" fill="#001080"/><rect x="9" y="84" width="1" height="1.75" fill="#C8C8C8"/><rect x="10" y="84" width="9" height="1.75" fill="#3B3B3B"/><rect x="19" y="84" width="2" height="1.75" fill="#C8C8C8"/><rect x="21" y="84" width="6" height="1.75" fill="#A31515"/><rect x="27" y="84" width="1" height="1.75" fill="#C8C8C8"/><rect x="4" y="86" width="1" height="1.75" fill="#001080"/><rect x="5" y="86" width="1" height="1.75" fill="#C8C8C8"/><rect x="6" y="86" width="4" height="1.75" fill="#001080"/><rect x="10" y="86" width="1" height="1.75" fill="#C8C8C8"/><rect x="11" y="86" width="4" height="1.75" fill="#795E26"/><rect x="15" y="86" width="2" height="1.75" fill="#C8C8C8"/><rect x="4" y="88" width="4" height="1.75" fill="#001080"/><rect x="8" y="88" width="1" height="1.75" fill="#C8C8C8"/><rect x="9" y="88" width="4" height="1.75" fill="#795E26"/><rect x="13" y="88" width="1" height="1.75" fill="#C8C8C8"/><rect x="14" y="88" width="1" height="1.75" fill="#001080"/><rect x="15" y="88" width="1" height="1.75" fill="#C8C8C8"/><rect x="16" y="88" width="2" height="1.75" fill="#098658"/><rect x="18" y="88" width="1" height="1.75" fill="#C8C8C8"/><rect x="2" y="90" width="2" height="1.75" fill="#AF00DB"/><rect x="5" y="90" width="4" height="1.75" fill="#001080"/><rect x="9" y="90" width="1" height="1.75" fill="#C8C8C8"/><rect x="10" y="90" width="9" height="1.75" fill="#3B3B3B"/><rect x="19" y="90" width="2" height="1.75" fill="#C8C8C8"/><rect x="21" y="90" width="6" height="1.75" fill="#A31515"/><rect x="27" y="90" width="1" height="1.75" fill="#C8C8C8"/><rect x="4" y="92" width="1" height="1.75" fill="#001080"/><rect x="5" y="92" width="1" height="1.75" fill="#C8C8C8"/><rect x="6" y="92" width="4" height="1.75" fill="#001080"/><rect x="10" y="92" width="1" height="1.75" fill="#C8C8C8"/><rect x="11" y="92" width="4" height="1.75" fill="#795E26"/><rect x="15" y="92" width="2" height="1.75" fill="#C8C8C8"/><rect x="4" y="94" width="4" height="1.75" fill="#001080"/><rect x="8" y="94" width="1" height="1.75" fill="#C8C8C8"/><rect x="9" y="94" width="4" height="1.75" fill="#795E26"/><rect x="13" y="94" width="1" height="1.75" fill="#C8C8C8"/><rect x="14" y="94" width="1" height="1.75" fill="#001080"/><rect x="15" y="94" width="1" height="1.75" fill="#C8C8C8"/><rect x="16" y="94" width="2" height="1.75" fill="#098658"/><rect x="18" y="94" width="1" height="1.75" fill="#C8C8C8"/><rect x="2" y="96" width="2" height="1.75" fill="#AF00DB"/><rect x="5" y="96" width="4" height="1.75" fill="#001080"/><rect x="9" y="96" width="1" height="1.75" fill="#C8C8C8"/><rect x="10" y="96" width="9" height="1.75" fill="#3B3B3B"/><rect x="19" y="96" width="2" height="1.75" fill="#C8C8C8"/><rect x="21" y="96" width="7" height="1.75" fill="#A31515"/><rect x="28" y="96" width="1" height="1.75" fill="#C8C8C8"/><rect x="4" y="98" width="1" height="1.75" fill="#001080"/><rect x="5" y="98" width="1" height="1.75" fill="#C8C8C8"/><rect x="6" y="98" width="4" height="1.75" fill="#001080"/><rect x="10" y="98" width="1" height="1.75" fill="#C8C8C8"/><rect x="11" y="98" width="4" height="1.75" fill="#795E26"/><rect x="15" y="98" width="2" height="1.75" fill="#C8C8C8"/><rect x="4" y="100" width="4" height="1.75" fill="#001080"/><rect x="8" y="100" width="1" height="1.75" fill="#C8C8C8"/><rect x="9" y="100" width="4" height="1.75" fill="#795E26"/><rect x="13" y="100" width="1" height="1.75" fill="#C8C8C8"/><rect x="14" y="100" width="1" height="1.75" fill="#001080"/><rect x="15" y="100" width="1" height="1.75" fill="#C8C8C8"/><rect x="16" y="100" width="2" height="1.75" fill="#098658"/><rect x="18" y="100" width="1" height="1.75" fill="#C8C8C8"/><rect x="0" y="108" width="5" height="1.75" fill="#AF00DB"/><rect x="6" y="108" width="4" height="1.75" fill="#0000FF"/><rect x="10" y="108" width="1" height="1.75" fill="#C8C8C8"/><rect x="2" y="110" width="2" height="1.75" fill="#001080"/><rect x="4" y="110" width="1" height="1.75" fill="#C8C8C8"/><rect x="5" y="110" width="6" height="1.75" fill="#795E26"/><rect x="11" y="110" width="2" height="1.75" fill="#C8C8C8"/><rect x="2" y="112" width="4" height="1.75" fill="#795E26"/><rect x="6" y="112" width="2" height="1.75" fill="#C8C8C8"/><rect x="2" y="114" width="4" height="1.75" fill="#267F99"/><rect x="6" y="114" width="1" height="1.75" fill="#C8C8C8"/><rect x="7" y="114" width="5" height="1.75" fill="#795E26"/><rect x="12" y="114" width="1" height="1.75" fill="#C8C8C8"/><rect x="13" y="114" width="5" height="1.75" fill="#001080"/><rect x="18" y="114" width="1" height="1.75" fill="#C8C8C8"/><rect x="0" y="122" width="2" height="1.75" fill="#001080"/><rect x="2" y="122" width="1" height="1.75" fill="#C8C8C8"/><rect x="3" y="122" width="8" height="1.75" fill="#795E26"/><rect x="11" y="122" width="2" height="1.75" fill="#C8C8C8"/></g></svg>
<div class="a" style="left:1128px;top:90px;width:1px;height:592px;background:#E8E8E8"></div>
<div class="a" style="left:1128px;top:90px;width:14px;height:1px;background:#E8E8E8"></div>
<div class="a" style="left:1129px;top:444px;width:13px;height:2px;background:#3B3B3B"></div>
<div class="a" style="left:1133px;top:446px;width:5px;height:4px;background:#A0A0A0"></div>
<!-- status bar -->
<div class="a" style="left:0;top:682px;width:1142px;height:21px;background:#F8F8F8"></div>
<div class="a" style="left:0;top:682px;width:1142px;height:1px;background:#E5E5E5"></div>
<div class="a" style="left:0;top:683px;width:32px;height:20px;background:#005FB8"></div>
<svg style="left:10px;top:686px" width="11" height="13" viewBox="0 0 11 13"><path d="M1.4 5.3L4.6 8.4L1.4 11.9M8.7 1.4L5.6 4.9L8.7 8.4" fill="none" stroke="#fff" stroke-width="1.1"/></svg>
<svg style="left:40px;top:687px" width="14" height="12" viewBox="0 0 14 12"><circle cx="6.8" cy="5.7" r="5.5" fill="none" stroke="#3B3B3B" stroke-width="1"/><path d="M4.6 3.5L9 7.9M9 3.5L4.6 7.9" stroke="#3B3B3B" stroke-width="1"/></svg>
<div class="t" style="left:57px;top:683px;font-size:12.5px;line-height:20px;color:#3B3B3B">0</div>
<svg style="left:69px;top:686px" width="13" height="13" viewBox="0 0 13 13"><path d="M6.3 1L11.8 11.6H0.8Z" fill="none" stroke="#3B3B3B" stroke-width="1" stroke-linejoin="round"/><path d="M6.3 4.5V8.3M6.3 9.3V10.4" stroke="#3B3B3B" stroke-width="1"/></svg>
<div class="t" style="left:86px;top:683px;font-size:12.5px;line-height:20px;color:#3B3B3B">0</div>
<svg style="left:110px;top:686px" width="13" height="13" viewBox="0 0 13 13"><circle cx="6.3" cy="4.5" r="1.1" fill="#3B3B3B"/><path d="M3.8 1.8Q2.4 4.5 3.8 7.2M8.8 1.8Q10.2 4.5 8.8 7.2M1.8 0.8Q-0.4 4.5 1.8 8.2M10.8 0.8Q13 4.5 10.8 8.2M6.3 5L3.8 12M6.3 5L8.8 12M4.6 9.8H8" fill="none" stroke="#3B3B3B" stroke-width="0.9"/></svg>
<div class="t" style="left:127px;top:683px;font-size:12.5px;line-height:20px;color:#3B3B3B">0</div>
<div class="t" style="left:702px;top:683px;font-size:12.6px;line-height:20px;color:#3B3B3B">Ln 58, Col 20</div>
<div class="t" style="left:795px;top:683px;font-size:12.3px;line-height:20px;color:#3B3B3B">Spaces: 2</div>
<div class="t" style="left:867px;top:683px;font-size:12.3px;line-height:20px;color:#3B3B3B">UTF-8</div>
<div class="t" style="left:919px;top:683px;font-size:12.3px;line-height:20px;color:#3B3B3B">LF</div>
<svg style="left:944px;top:684px" width="20" height="18" viewBox="0 0 20 18"><path d="M7.6 4.1Q5.9 4.3 5.9 6V7.6Q5.9 8.9 4.9 9Q5.9 9.1 5.9 10.4V12Q5.9 13.5 7.6 13.7M12.2 4.2Q13.7 4.4 13.7 6V7Q13.7 8.3 14.8 8.5" fill="none" stroke="#3B3B3B" stroke-width="1"/><circle cx="13.4" cy="12.6" r="2.3" fill="#3B3B3B"/></svg>
<div class="t" style="left:967px;top:683px;font-size:12.3px;line-height:20px;color:#3B3B3B">Python</div>
<div class="t" style="left:1021px;top:683px;font-size:12.6px;line-height:20px;letter-spacing:0.5px;color:#3B3B3B">3.11.4 64-bit</div>
<svg style="left:1114px;top:686px" width="13" height="14" viewBox="0 0 13 14"><path d="M2 10.2V6.2Q2 1.5 6.4 1.5Q10.8 1.5 10.8 6.2V10.2L11.8 11.2H1Z" fill="none" stroke="#3B3B3B" stroke-width="1" stroke-linejoin="round"/><path d="M5 12.2Q6.4 13.6 7.8 12.2" fill="none" stroke="#3B3B3B" stroke-width="1"/></svg>

</div></div>
</body></html>
